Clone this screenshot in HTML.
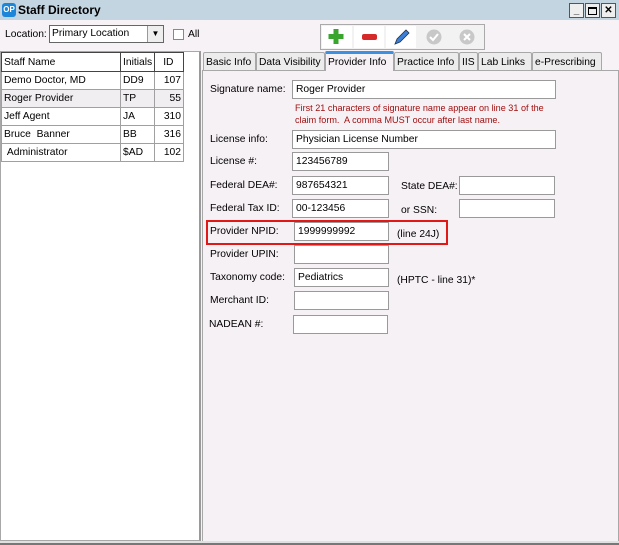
<!DOCTYPE html>
<html><head><meta charset="utf-8"><style>
*{box-sizing:border-box;margin:0;padding:0}
body{width:619px;height:545px;position:relative;overflow:hidden;background:#f6f2f6;font-family:"Liberation Sans",sans-serif;font-size:10.3px;color:#000}
.a{position:absolute;white-space:nowrap}
.inp{position:absolute;background:#fff;border:1px solid #9a9a9a;height:19px;padding:3px 3px 0;font-size:10.3px;white-space:nowrap}
.lbl{position:absolute;font-size:10.3px;white-space:nowrap}
.tab{position:absolute;top:52px;height:18px;border:1px solid #a8a8a8;border-bottom:none;background:#ececec;font-size:10.3px;padding:4px 0 0 2px;border-radius:2px 2px 0 0;white-space:nowrap;overflow:hidden}
td{border:1px solid #a0a0a0;height:18px;padding:0 2px;font-size:10.3px;white-space:nowrap}
.wb{position:absolute;top:3px;width:15px;height:15px;border:1px solid #555;background:#eee;font-size:10px;text-align:center;line-height:13px;font-weight:bold}
</style></head><body>
<div class="a" style="left:0;top:0;width:619px;height:20px;background:#c4d5e2"></div>
<div class="a" style="left:2px;top:3px;width:14px;height:14px;background:#1e86d8;border-radius:3px;color:#fff;font-size:8px;font-weight:bold;line-height:14px;text-align:center">OP</div>
<div class="a" style="left:18px;top:3px;font-weight:bold;font-size:12px">Staff Directory</div>
<div class="wb" style="left:569px">_</div>
<div class="wb" style="left:585px"><div style="width:9px;height:8px;border:1px solid #000;border-top-width:2px;margin:3px auto 0"></div></div>
<div class="wb" style="left:601px">✕</div>

<div class="a" style="left:5px;top:29px">Location:</div>
<div class="a" style="left:49px;top:25px;width:115px;height:18px;background:#fff;border:1px solid #666;padding:2px 2px">Primary Location</div>
<div class="a" style="left:147px;top:26px;width:16px;height:16px;background:#eee;border-left:1px solid #999;font-size:8px;text-align:center;line-height:16px">▼</div>
<div class="a" style="left:173px;top:29px;width:11px;height:11px;border:1px solid #888;background:#fff"></div>
<div class="a" style="left:188px;top:29px">All</div>

<div class="a" style="left:320px;top:24px;width:165px;height:26px;border:1px solid #aaa;background:#f2f2f2"></div>
<svg class="a" style="left:320px;top:24px" width="165" height="26">
<rect x="2" y="2" width="30" height="22" fill="#fff"/><rect x="34" y="2" width="30" height="22" fill="#fff"/><rect x="66" y="2" width="30" height="22" fill="#fff"/>
<path d="M16 5v15M8.5 12.5h15" stroke="#3aa52d" stroke-width="5"/>
<rect x="42" y="10" width="15" height="6" rx="2" fill="#d62a2a"/>
<path d="M75 20l2-5 9-9 3 3-9 9z" fill="#3b7fd9" stroke="#234" stroke-width=".8"/>
<circle cx="114" cy="13" r="7.5" fill="#c8c8c8"/><path d="M110 13l3 3 5-6" stroke="#fff" stroke-width="2" fill="none"/>
<circle cx="147" cy="13" r="7.5" fill="#c8c8c8"/><path d="M144 10l6 6M150 10l-6 6" stroke="#fff" stroke-width="2"/>
</svg>

<div class="a" style="left:0;top:51px;width:201px;height:490px;background:#fff;border:1px solid #a8a8a8;border-right:2px solid #9a9a9a"></div>
<table class="a" style="left:1px;top:52px;border-collapse:collapse;width:183px">
<tr style="height:19px"><td style="width:119px;border:1px solid #444">Staff Name</td><td style="width:34px;border:1px solid #444">Initials</td><td style="border:1px solid #444;padding-left:8px">ID</td></tr>
<tr><td>Demo Doctor, MD</td><td>DD9</td><td style="text-align:right">107</td></tr>
<tr style="background:#f1eef1"><td>Roger Provider</td><td>TP</td><td style="text-align:right">55</td></tr>
<tr><td>Jeff Agent</td><td>JA</td><td style="text-align:right">310</td></tr>
<tr><td>Bruce&nbsp; Banner</td><td>BB</td><td style="text-align:right">316</td></tr>
<tr><td>&nbsp;Administrator</td><td>$AD</td><td style="text-align:right">102</td></tr>
</table>

<div class="a" style="left:202px;top:70px;width:417px;height:472px;background:#f6f1f5;border:1px solid #a8a8a8"></div>
<div class="tab" style="left:203px;width:53px">Basic Info</div>
<div class="tab" style="left:256px;width:69px">Data Visibility</div>
<div class="tab" style="left:325px;width:69px;top:51px;height:20px;background:#f6f1f5;border-top:3px solid #3d8fe0;padding-top:3px">Provider Info</div>
<div class="tab" style="left:394px;width:65px">Practice Info</div>
<div class="tab" style="left:459px;width:19px">IIS</div>
<div class="tab" style="left:478px;width:54px">Lab Links</div>
<div class="tab" style="left:532px;width:70px">e-Prescribing</div>

<div class="lbl" style="left:210px;top:84px">Signature name:</div>
<div class="inp" style="left:292px;top:80px;width:264px">Roger Provider</div>
<div class="a" style="left:295px;top:102px;font-size:9.1px;color:#a01010;line-height:12px">First 21 characters of signature name appear on line 31 of the<br>claim form.&nbsp; A comma MUST occur after last name.</div>
<div class="lbl" style="left:210px;top:134px">License info:</div>
<div class="inp" style="left:292px;top:130px;width:264px">Physician License Number</div>
<div class="lbl" style="left:210px;top:156px">License #:</div>
<div class="inp" style="left:292px;top:152px;width:97px">123456789</div>
<div class="lbl" style="left:210px;top:180px">Federal DEA#:</div>
<div class="inp" style="left:292px;top:176px;width:97px">987654321</div>
<div class="lbl" style="left:401px;top:181px">State DEA#:</div>
<div class="inp" style="left:459px;top:176px;width:96px"></div>
<div class="lbl" style="left:210px;top:203px">Federal Tax ID:</div>
<div class="inp" style="left:292px;top:199px;width:97px">00-123456</div>
<div class="lbl" style="left:401px;top:205px">or SSN:</div>
<div class="inp" style="left:459px;top:199px;width:96px"></div>
<div class="a" style="left:206px;top:220px;width:242px;height:25px;border:2px solid #e01818"></div>
<div class="lbl" style="left:210px;top:226px">Provider NPID:</div>
<div class="inp" style="left:294px;top:222px;width:95px">1999999992</div>
<div class="lbl" style="left:397px;top:229px">(line 24J)</div>
<div class="lbl" style="left:210px;top:249px">Provider UPIN:</div>
<div class="inp" style="left:294px;top:245px;width:95px"></div>
<div class="lbl" style="left:210px;top:272px">Taxonomy code:</div>
<div class="inp" style="left:294px;top:268px;width:95px">Pediatrics</div>
<div class="lbl" style="left:397px;top:275px">(HPTC - line 31)*</div>
<div class="lbl" style="left:210px;top:295px">Merchant ID:</div>
<div class="inp" style="left:294px;top:291px;width:95px"></div>
<div class="lbl" style="left:209px;top:319px">NADEAN #:</div>
<div class="inp" style="left:293px;top:315px;width:95px"></div>

<div class="a" style="left:0;top:541px;width:619px;height:4px;background:#e0e0e0;border-bottom:2px solid #777"></div>
</body></html>
